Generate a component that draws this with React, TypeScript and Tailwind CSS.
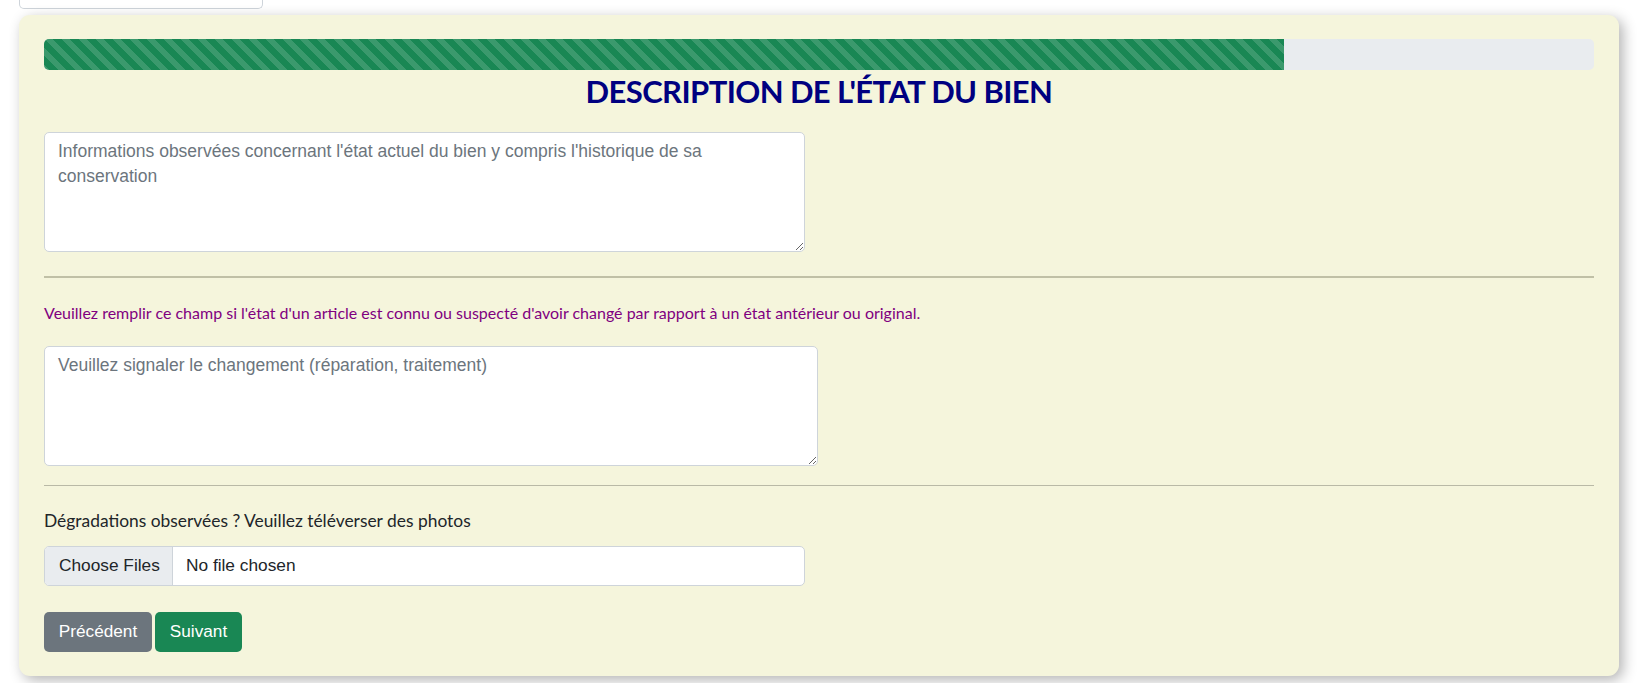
export default function App() {
  return (
    <div className="min-h-screen bg-white font-['Lato','Liberation_Sans',sans-serif] text-[#212529]">
      {/* input above the card, mostly scrolled out of view */}
      <div className="ml-[19px] h-[9px] w-[244px] rounded-b-[5px] border-x border-b border-[#ced4da] bg-white" />

      <div className="ml-[19px] mt-[6px] w-[1600px] rounded-[11px] bg-[#f5f5dc] px-[25px] pb-[24px] pt-[24px] shadow-[4px_4px_14px_rgba(0,0,0,0.3)]">
        <div className="h-[31px] w-full overflow-hidden rounded-[5px] bg-[#e9ecef]">
          <div className="h-full w-[80%] bg-[#198754] bg-[linear-gradient(45deg,rgba(255,255,255,.15)_25%,transparent_25%,transparent_50%,rgba(255,255,255,.15)_50%,rgba(255,255,255,.15)_75%,transparent_75%,transparent)] bg-[length:17px_17px]" />
        </div>

        <h2 className="mt-[1px] text-center text-[31px] font-bold leading-[40px] tracking-[-0.6px] text-[#000080]">
          DESCRIPTION DE L'ÉTAT DU BIEN
        </h2>

        <textarea
          className="mt-[21px] block h-[120px] w-[761px] rounded-[5px] border border-[#ced4da] bg-white px-[13px] py-[6px] font-['Liberation_Sans',Arial,sans-serif] text-[17.5px] leading-[25.3px] text-[#212529] outline-none placeholder:text-[#6c757d]"
          placeholder="Informations observées concernant l'état actuel du bien y compris l'historique de sa conservation"
        />

        <hr className="mt-[24px] border-t-2 border-[#c0c0a6]" />

        <p className="mt-[24px] text-[16px] leading-[22px] text-[#800080]">
          Veuillez remplir ce champ si l'état d'un article est connu ou suspecté d'avoir changé par rapport à un état antérieur ou original.
        </p>

        <textarea
          className="mt-[22px] block h-[120px] w-[774px] rounded-[5px] border border-[#ced4da] bg-white px-[13px] py-[6px] font-['Liberation_Sans',Arial,sans-serif] text-[17.5px] leading-[25.3px] text-[#212529] outline-none placeholder:text-[#6c757d]"
          placeholder="Veuillez signaler le changement (réparation, traitement)"
        />

        <hr className="mt-[19px] border-t border-[#b9b9a6]" />

        <label className="mt-[22px] block text-[17.4px] leading-[25.3px] text-[#212529]">
          Dégradations observées ? Veuillez téléverser des photos
        </label>

        <div className="mt-[13px] flex h-[40px] w-[761px] items-stretch overflow-hidden rounded-[5px] border border-[#ced4da] bg-white font-['Liberation_Sans',Arial,sans-serif] text-[17.3px] text-[#212529]">
          <span className="flex w-[128px] items-center border-r border-[#ced4da] bg-[#e9ecef] pl-[14px]">Choose Files</span>
          <span className="flex items-center pl-[13px]">No file chosen</span>
        </div>

        <div className="mt-[26px] flex gap-[3px] font-['Liberation_Sans',Arial,sans-serif] text-[17.2px] text-white">
          <button className="h-[40px] w-[108px] rounded-[5px] bg-[#6c757d]">Précédent</button>
          <button className="h-[40px] w-[87px] rounded-[5px] bg-[#198754]">Suivant</button>
        </div>
      </div>
    </div>
  );
}
